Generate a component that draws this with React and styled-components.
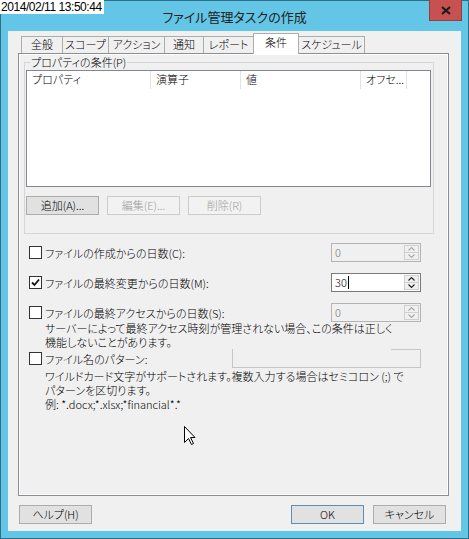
import React from 'react';
import styled, { createGlobalStyle } from 'styled-components';

const Global = createGlobalStyle`
  html, body { margin: 0; padding: 0; background: #ffffff; }
  body { width: 469px; height: 539px; overflow: hidden; }
  *, *::before, *::after { box-sizing: border-box; }
`;

const UI = `"Noto Sans CJK JP", "Noto Sans", sans-serif`;

const Window = styled.div`
  position: relative;
  width: 469px;
  height: 539px;
  background: #64c6e6;
  border: 1px solid #2f6f86;
  display: flex;
  flex-direction: column;
  font-family: ${UI};
  font-size: 11px;
  font-weight: 300;
  font-feature-settings: "palt";
  color: #000;
`;

const Timestamp = styled.div`
  position: absolute;
  left: -1px;
  top: -1px;
  width: 104px;
  height: 14px;
  background: #fff;
  color: #000;
  font-family: "Liberation Sans", Arial, sans-serif;
  font-weight: 400;
  font-size: 12px;
  line-height: 14px;
  letter-spacing: -0.45px;
  padding-left: 1px;
  white-space: nowrap;
  z-index: 5;
`;

const TitleBar = styled.div`
  display: grid;
  grid-template-columns: 1fr auto 1fr;
  align-items: center;
  height: 30px;
  flex: 0 0 30px;
`;

const Title = styled.div`
  grid-column: 2;
  font-size: 13px;
  font-weight: 400;
  color: #222;
  white-space: nowrap;
`;

const CloseButton = styled.div`
  grid-column: 3;
  justify-self: end;
  align-self: start;
  width: 33px;
  height: 21px;
  margin: -1px 6px 0 0;
  background: #c75050;
  border: 1px solid #9a3d39;
  border-top: none;
  display: flex;
  align-items: center;
  justify-content: center;
`;

const Client = styled.div`
  flex: 1;
  margin: 0 7px 7px 7px;
  background: #f0f0f0;
  display: flex;
  flex-direction: column;
`;

const TabControl = styled.div`
  margin: 2px 12px 0 10px;
  display: flex;
  flex-direction: column;
`;

const TabStrip = styled.div`
  height: 20px;
  display: flex;
  align-items: flex-end;
  padding-left: 3px;
`;

const Tab = styled.div`
  position: relative;
  width: ${p => p.$w}px;
  height: ${p => (p.$active ? 21 : 17)}px;
  margin-left: ${p => (p.$first ? 0 : -1)}px;
  margin-bottom: ${p => (p.$active ? -1 : 0)}px;
  z-index: ${p => (p.$active ? 2 : 1)};
  background: ${p => (p.$active ? '#ffffff' : '#f0f0f0')};
  border: 1px solid #acacac;
  border-bottom: none;
  display: flex;
  justify-content: center;
  line-height: ${p => (p.$active ? 17 : 15)}px;
  white-space: nowrap;
`;

const Panel = styled.div`
  height: 443px;
  border: 1px solid #8c8e94;
  box-shadow: inset 1px 1px 0 #ffffff, inset -1px -1px 0 #ffffff;
  background: #f0f0f0;
  display: flex;
  flex-direction: column;
`;

const GroupBox = styled.fieldset`
  margin: 1px 0 0 5px;
  width: 410px;
  padding: 1px 2px 18px 1px;
  border: 1px solid #d5d5d5;
  min-width: 0;
`;

const Legend = styled.legend`
  margin-left: 4px;
  padding: 0 1px;
  line-height: 14px;
`;

const List = styled.div`
  height: 117px;
  width: 405px;
  border: 1px solid #828790;
  background: #ffffff;
`;

const ListHeader = styled.div`
  display: flex;
  height: 18px;
`;

const HeaderCell = styled.div`
  width: ${p => p.$w}px;
  padding-left: 5px;
  border-right: 1px solid #e3e3e3;
  line-height: 17px;
  white-space: nowrap;
  overflow: hidden;
`;

const ButtonRow = styled.div`
  display: flex;
  gap: 8px;
  margin-top: 9px;
`;

const Button = styled.div`
  width: 73px;
  height: 19px;
  display: flex;
  align-items: center;
  justify-content: center;
  white-space: nowrap;
  border: 1px solid
    ${p => (p.$disabled ? '#cbcbcb' : p.$default ? '#5e8db5' : '#acacac')};
  background: ${p => (p.$disabled ? '#f2f2f2' : '#e1e1e1')};
  color: ${p => (p.$disabled ? '#9d9d9d' : '#000')};
  line-height: 17px;
`;

const OptionRow = styled.div`
  display: grid;
  grid-template-columns: 1fr auto;
  align-items: center;
  height: 19px;
  margin-top: ${p => p.$mt}px;
  padding: 0 27px 0 10px;
`;

const CheckLabel = styled.div`
  display: flex;
  align-items: center;
  gap: 3px;
  white-space: nowrap;
`;

const CheckBox = styled.span`
  width: 13px;
  height: 13px;
  border: 1px solid #333333;
  background: #ffffff;
  display: inline-flex;
  align-items: center;
  justify-content: center;
  flex: 0 0 13px;
`;

const Spinner = styled.div`
  width: 90px;
  height: 19px;
  display: flex;
  border: 1px solid ${p => (p.$disabled ? '#b4b4b4' : '#7a7a7a')};
  background: ${p => (p.$disabled ? '#f0f0f0' : '#ffffff')};
`;

const SpinValue = styled.div`
  flex: 1;
  display: flex;
  align-items: center;
  padding-left: 3px;
  color: ${p => (p.$disabled ? '#7a7a7a' : '#000')};
  line-height: 17px;
`;

const Caret = styled.span`
  display: inline-block;
  width: 1px;
  height: 13px;
  background: #000;
  margin-left: 1px;
`;

const SpinButtons = styled.div`
  width: 17px;
  display: flex;
  flex-direction: column;
  padding: 1px;
`;

const SpinButton = styled.div`
  flex: 1;
  border: 1px solid #cfcfcf;
  margin-top: ${p => (p.$down ? -1 : 0)}px;
  background: #f0f0f0;
  display: flex;
  align-items: center;
  justify-content: center;
`;

const TextBox = styled.div`
  width: 189px;
  height: 19px;
  border: 1px solid #c6c6c6;
  border-top: none;
  background: linear-gradient(#c6c6c6, #c6c6c6) right top / 29px 1px no-repeat,
    #f0f0f0;
`;

const Note = styled.div`
  padding-left: 26px;
  margin-top: ${p => p.$mt}px;
  line-height: 14px;
  white-space: nowrap;
`;

const Footer = styled.div`
  display: flex;
  justify-content: space-between;
  margin-top: 9px;
  padding: 0 15px 0 11px;
`;

const FooterGroup = styled.div`
  display: flex;
  gap: 9px;
`;

const Cursor = styled.svg`
  position: absolute;
  left: 182px;
  top: 424px;
  z-index: 6;
`;

const Chevron = ({ up, disabled }) => (
  <svg width="7" height="4" viewBox="0 0 7 4">
    <polyline
      points={up ? '0.5,3.5 3.5,0.5 6.5,3.5' : '0.5,0.5 3.5,3.5 6.5,0.5'}
      fill="none"
      stroke={disabled ? '#a8a8a8' : '#222'}
      strokeWidth="1.1"
    />
  </svg>
);

const NumSpinner = ({ value, disabled, focused }) => (
  <Spinner $disabled={disabled}>
    <SpinValue $disabled={disabled}>
      {value}
      {focused && <Caret />}
    </SpinValue>
    <SpinButtons>
      <SpinButton>
        <Chevron up disabled={disabled} />
      </SpinButton>
      <SpinButton $down>
        <Chevron disabled={disabled} />
      </SpinButton>
    </SpinButtons>
  </Spinner>
);

const Check = ({ checked, children }) => (
  <CheckLabel>
    <CheckBox>
      {checked && (
        <svg width="9" height="9" viewBox="0 0 9 9">
          <polyline points="1,4.5 3.5,7 8,1.5" fill="none" stroke="#111" strokeWidth="1.8" />
        </svg>
      )}
    </CheckBox>
    <span>{children}</span>
  </CheckLabel>
);

const tabs = [
  { label: '全般', w: 42 },
  { label: 'スコープ', w: 47 },
  { label: 'アクション', w: 57 },
  { label: '通知', w: 40 },
  { label: 'レポート', w: 51 },
  { label: '条件', w: 46, active: true },
  { label: 'スケジュール', w: 67 },
];

export default function App() {
  return (
    <>
      <Global />
      <Window>
        <Timestamp>2014/02/11 13:50:44</Timestamp>
        <TitleBar>
          <Title>ファイル管理タスクの作成</Title>
          <CloseButton>
            <svg width="10" height="9" viewBox="0 0 10 9">
              <path d="M1 1 L9 8 M9 1 L1 8" stroke="#1c1c1c" strokeWidth="2.2" />
            </svg>
          </CloseButton>
        </TitleBar>
        <Client>
          <TabControl>
            <TabStrip>
              {tabs.map((t, i) => (
                <Tab key={t.label} $w={t.w} $active={t.active} $first={i === 0}>
                  {t.label}
                </Tab>
              ))}
            </TabStrip>
            <Panel>
              <GroupBox>
                <Legend>プロパティの条件(P)</Legend>
                <List>
                  <ListHeader>
                    <HeaderCell $w={124}>プロパティ</HeaderCell>
                    <HeaderCell $w={90}>演算子</HeaderCell>
                    <HeaderCell $w={120}>値</HeaderCell>
                    <HeaderCell $w={46}>オフセ...</HeaderCell>
                  </ListHeader>
                </List>
                <ButtonRow>
                  <Button>追加(A)...</Button>
                  <Button $disabled>編集(E)...</Button>
                  <Button $disabled>削除(R)</Button>
                </ButtonRow>
              </GroupBox>

              <OptionRow $mt={9}>
                <Check>ファイルの作成からの日数(C):</Check>
                <NumSpinner value="0" disabled />
              </OptionRow>
              <OptionRow $mt={11}>
                <Check checked>ファイルの最終変更からの日数(M):</Check>
                <NumSpinner value="30" focused />
              </OptionRow>
              <OptionRow $mt={11}>
                <Check>ファイルの最終アクセスからの日数(S):</Check>
                <NumSpinner value="0" disabled />
              </OptionRow>
              <Note $mt={-1}>
                サーバーによって最終アクセス時刻が管理されない場合、この条件は正しく
                <br />
                機能しないことがあります。
              </Note>
              <OptionRow $mt={0}>
                <Check>ファイル名のパターン:</Check>
                <TextBox />
              </OptionRow>
              <Note $mt={1}>
                ワイルドカード文字がサポートされます。複数入力する場合はセミコロン (;) で
                <br />
                パターンを区切ります。
              </Note>
              <Note $mt={0}>例: *.docx;*.xlsx;*financial*.*</Note>
            </Panel>
          </TabControl>
          <Footer>
            <Button>ヘルプ(H)</Button>
            <FooterGroup>
              <Button $default>OK</Button>
              <Button>キャンセル</Button>
            </FooterGroup>
          </Footer>
        </Client>
        <Cursor width="13" height="21" viewBox="0 0 13 21">
          <path
            d="M1.5 1.5 L1.5 17.5 L5.5 13.5 L8.5 19.5 L10.5 18.5 L7.5 12.5 L12 12.5 Z"
            fill="#fff"
            stroke="#000"
            strokeWidth="1"
            strokeLinejoin="miter"
          />
        </Cursor>
      </Window>
    </>
  );
}
